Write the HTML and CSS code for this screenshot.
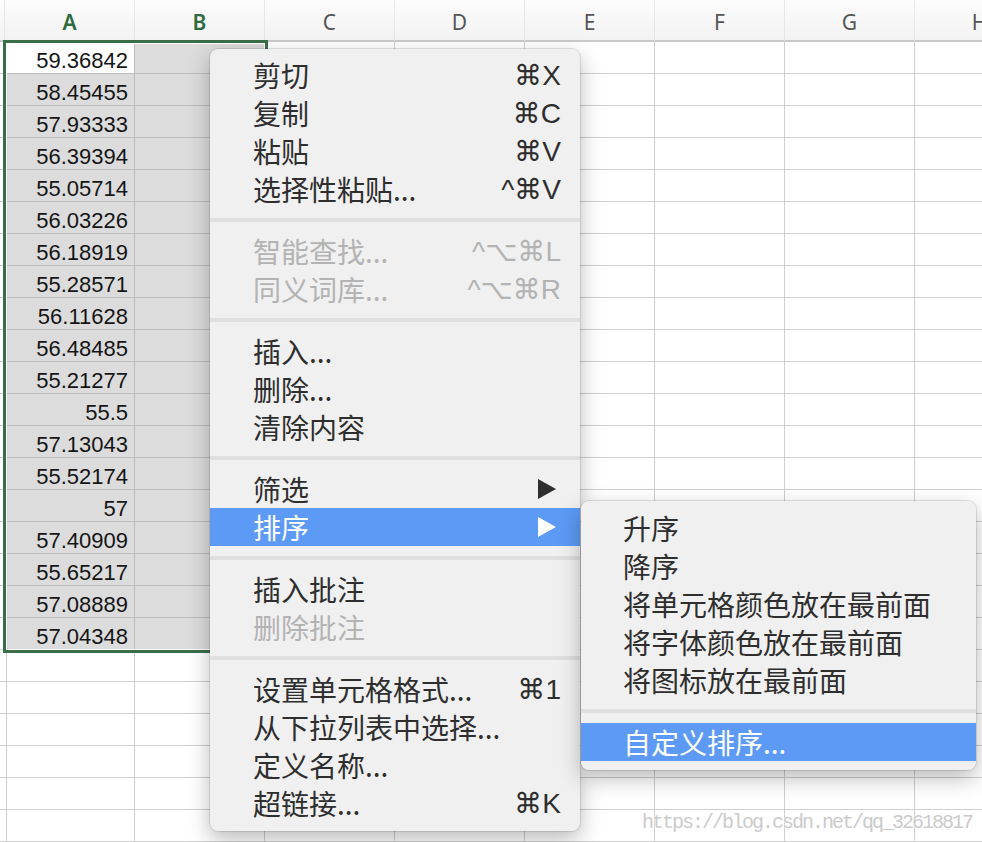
FILE: index.html
```html
<!DOCTYPE html>
<html lang="zh-CN">
<head>
    <meta charset="UTF-8">
    <title>排序</title>
    <link rel="stylesheet" href="styles.css">
</head>
<body>
    <!-- Worksheet grid, rows are filled in by the script below -->
    <div class="sheet" id="sheet">
        <div class="col-head corner"></div>
        <div class="col-head picked">A</div>
        <div class="col-head picked">B</div>
        <div class="col-head">C</div>
        <div class="col-head">D</div>
        <div class="col-head">E</div>
        <div class="col-head">F</div>
        <div class="col-head">G</div>
        <div class="col-head">H</div>
    </div>

    <!-- Selected range A1:B19 -->
    <div class="selection"></div>

    <!-- Context menu -->
    <div class="menu main-menu">
        <div class="item"><span>剪切</span><span class="key">⌘X</span></div>
        <div class="item"><span>复制</span><span class="key">⌘C</span></div>
        <div class="item"><span>粘贴</span><span class="key">⌘V</span></div>
        <div class="item"><span>选择性粘贴...</span><span class="key">^⌘V</span></div>
        <div class="sep"></div>
        <div class="item disabled"><span>智能查找...</span><span class="key">^⌥⌘L</span></div>
        <div class="item disabled"><span>同义词库...</span><span class="key">^⌥⌘R</span></div>
        <div class="sep"></div>
        <div class="item"><span>插入...</span></div>
        <div class="item"><span>删除...</span></div>
        <div class="item"><span>清除内容</span></div>
        <div class="sep"></div>
        <div class="item"><span>筛选</span><span class="arrow"></span></div>
        <div class="item hover"><span>排序</span><span class="arrow"></span></div>
        <div class="sep"></div>
        <div class="item"><span>插入批注</span></div>
        <div class="item disabled"><span>删除批注</span></div>
        <div class="sep"></div>
        <div class="item"><span>设置单元格格式...</span><span class="key">⌘1</span></div>
        <div class="item"><span>从下拉列表中选择...</span></div>
        <div class="item"><span>定义名称...</span></div>
        <div class="item"><span>超链接...</span><span class="key">⌘K</span></div>
    </div>

    <!-- Sort submenu -->
    <div class="menu sub-menu">
        <div class="item"><span>升序</span></div>
        <div class="item"><span>降序</span></div>
        <div class="item"><span>将单元格颜色放在最前面</span></div>
        <div class="item"><span>将字体颜色放在最前面</span></div>
        <div class="item"><span>将图标放在最前面</span></div>
        <div class="sep"></div>
        <div class="item hover"><span>自定义排序...</span></div>
    </div>

    <div class="watermark">https://blog.csdn.net/qq_32618817</div>

    <script>
        // Values in column A
        const values = [
            "59.36842", "58.45455", "57.93333", "56.39394", "55.05714",
            "56.03226", "56.18919", "55.28571", "56.11628", "56.48485",
            "55.21277", "55.5", "57.13043", "55.52174", "57",
            "57.40909", "55.65217", "57.08889", "57.04348"
        ];

        const sheet = document.getElementById("sheet");
        for (let r = 0; r < 25; r++) {
            for (let c = 0; c < 9; c++) {
                const cell = document.createElement("div");
                cell.className = "cell";
                if (r < values.length && (c === 1 || c === 2)) cell.classList.add("picked");
                if (r === 0 && c === 1) cell.classList.add("active");
                if (c === 1 && r < values.length) cell.textContent = values[r];
                sheet.appendChild(cell);
            }
        }
    </script>
</body>
</html>
```

FILE: styles.css
```css
body {
    margin: 0;
    width: 982px;
    height: 842px;
    overflow: hidden;
    position: relative;
    background-color: #fff;
    font-family: "Liberation Sans", Arial, sans-serif;
}
.sheet {
    display: grid;
    grid-template-columns: 5px repeat(8, 130px);
    grid-template-rows: 42px;
    grid-auto-rows: 32px;
    width: 1045px;
}
.col-head {
    display: flex;
    justify-content: center;
    align-items: center;
    box-sizing: border-box;
    background: linear-gradient(#fcfcfc, #f3f3f3);
    border-right: 1px solid #e6e6e6;
    border-bottom: 2px solid #c9c9c9;
    font-family: "Noto Sans", sans-serif;
    font-size: 21px;
    color: #555;
    padding-top: 3px;
}
.col-head.picked {
    color: #2f6b3e;
    font-weight: 600;
}
.cell {
    box-sizing: border-box;
    border-right: 1px solid #cfcfcf;
    border-bottom: 1px solid #cfcfcf;
    padding: 2px 6px 0 0;
    text-align: right;
    font-size: 22px;
    line-height: 33px;
    color: #151515;
    overflow: hidden;
}
.cell.picked {
    background-color: #dcdcdc;
    border-color: #bdbdbd;
}
.cell.active {
    background-color: #fff;
}
.selection {
    position: absolute;
    left: 3px;
    top: 40px;
    width: 265px;
    height: 613px;
    box-sizing: border-box;
    border: 3px solid #3b6e47;
    box-shadow: inset 0 0 0 1px #fff;
}
.menu {
    position: absolute;
    background-color: #f0f0f0;
    border-radius: 8px;
    box-shadow: 0 0 0 1px rgba(0, 0, 0, 0.1), 0 8px 22px rgba(0, 0, 0, 0.28);
    font-family: "Noto Sans CJK SC", sans-serif;
    font-size: 28px;
    color: #2e2e2e;
}
.main-menu {
    left: 210px;
    top: 49px;
    width: 370px;
    padding: 7px 0 9px;
}
.sub-menu {
    left: 581px;
    top: 501px;
    width: 395px;
    padding: 8px 0 9px;
}
.item {
    display: flex;
    justify-content: space-between;
    align-items: center;
    height: 38px;
    padding: 0 19px 0 43px;
    white-space: nowrap;
}
.sub-menu .item {
    padding-left: 42px;
}
.item.disabled {
    color: #b3b3b3;
}
.item.hover {
    background-color: #5c9af5;
    color: #fff;
}
.sep {
    height: 4px;
    margin: 10px 0;
    background-color: #dfdfdf;
}
.key {
    font-family: "Liberation Sans", "DejaVu Sans", sans-serif;
    font-size: 28px;
}
.arrow {
    width: 0;
    height: 0;
    border-left: 18px solid currentColor;
    border-top: 10px solid transparent;
    border-bottom: 10px solid transparent;
    margin-right: 5px;
}
.watermark {
    position: absolute;
    left: 642px;
    top: 811px;
    font-family: "Liberation Mono", monospace;
    font-size: 20px;
    letter-spacing: -2px;
    color: #cbcbcb;
    text-shadow: 0 0 2px #fff, 0 0 2px #fff;
}
```
